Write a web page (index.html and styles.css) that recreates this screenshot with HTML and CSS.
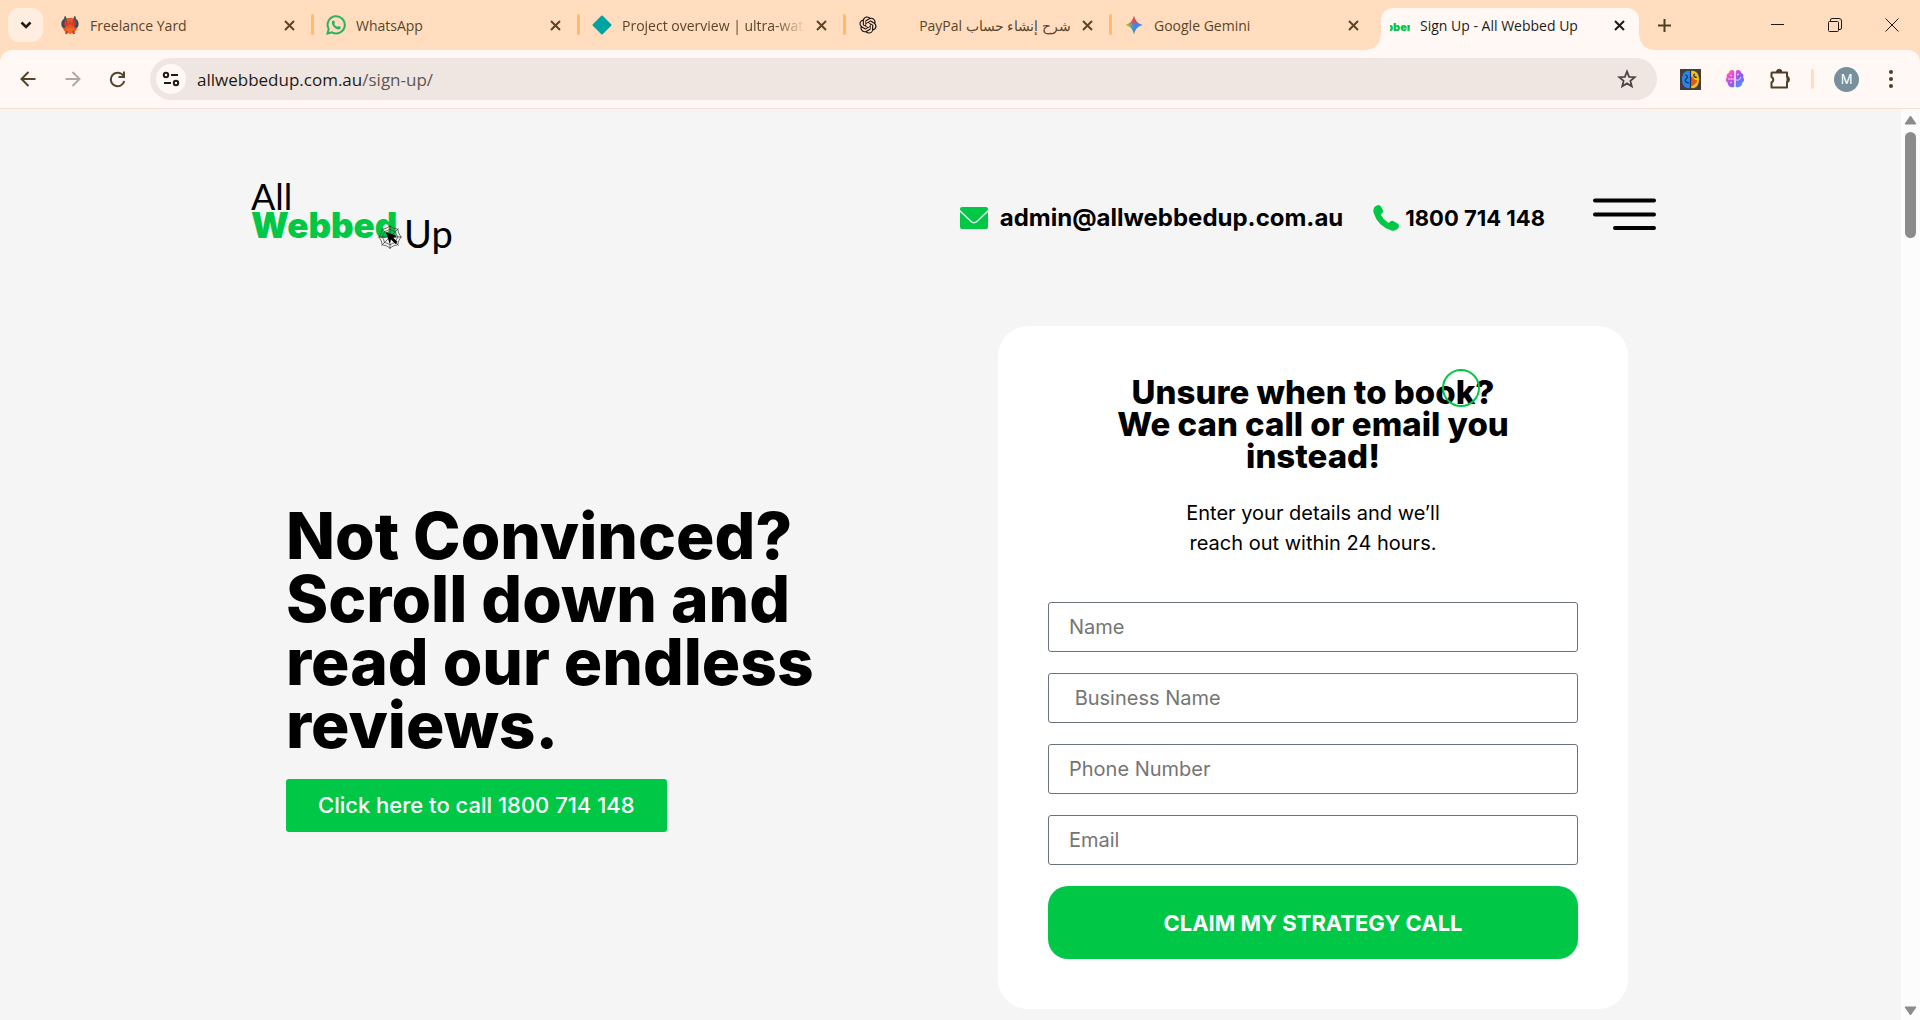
FILE: index.html
```html
<!DOCTYPE html>
<html lang="en">
<head>
<meta charset="utf-8">
<title>Sign Up - All Webbed Up</title>
<link rel="stylesheet" href="styles.css">
</head>
<body>
<div class="tabstrip">
  <button class="tab-search" aria-label="Search tabs"><svg width="12" height="8" viewBox="0 0 12 8"><path d="M1.500 1.500 6 6l4.500-4.500" fill="none" stroke="#1f1a16" stroke-width="2.600"/></svg></button>
  <div class="tab">
    <svg class="favicon" viewBox="0 0 20 20"><path d="M5 4.500Q3 2 5.500 1L7 4.500M15 4.500Q17 2 14.500 1L13 4.500" fill="#3b4a55"/><circle cx="10" cy="10.500" r="7.800" fill="#e4572a"/><path d="M2 12C0 7 3 3.500 6 3l1.500 5-3 5zM18 12c2-5-1-8.500-4-9l-1.500 5 3 5z" fill="#34505e"/><path d="M5 4 8 9l2-3 2 3 3-5 1 6-3 1-3-2-3 2-3-1z" fill="#d63a2e"/><path d="M5 17l5 2 5-2-2-4H7z" fill="#ef6b1c"/><path d="m7 16-1 3M13 16l1 3" stroke="#c9303e" stroke-width="2"/></svg>
    <span class="tab-title">Freelance Yard</span>
    <button class="tab-close" aria-label="Close tab"><svg width="11" height="11" viewBox="0 0 11 11"><path d="m1 1 9 9M10 1l-9 9"/></svg></button>
  </div>
  <div class="tab">
    <svg class="favicon" viewBox="0 0 20 20"><path d="M1.500 18.500 2.700 14A8.600 8.600 0 1 1 6 17.300z" fill="none" stroke="#2bb265" stroke-width="2"/><path d="M6 6.500C6.500 5.300 8 5 8.300 5.900l.7 1.800c.1.500-.7 1-.7 1.300.6 1.300 1.600 2.200 2.900 2.800.5 0 .9-1 1.400-.9l1.900.9c.7.400.1 2.200-1.200 2.600C9.700 15.100 5 10 6 6.500z" fill="#2bb265"/></svg>
    <span class="tab-title">WhatsApp</span>
    <button class="tab-close" aria-label="Close tab"><svg width="11" height="11" viewBox="0 0 11 11"><path d="m1 1 9 9M10 1l-9 9"/></svg></button>
  </div>
  <div class="tab">
    <svg class="favicon" viewBox="0 0 20 20"><path d="M10 1.500 18.500 10 10 18.500 1.500 10z" fill="#00a3a1" stroke="#00a3a1" stroke-width="2" stroke-linejoin="round"/></svg>
    <span class="tab-title faded">Project overview | ultra-wat</span>
    <button class="tab-close" aria-label="Close tab"><svg width="11" height="11" viewBox="0 0 11 11"><path d="m1 1 9 9M10 1l-9 9"/></svg></button>
  </div>
  <div class="tab">
    <svg class="favicon" viewBox="-2 -2 28 28"><path fill="#111" d="M22.282 9.821a5.985 5.985 0 0 0-.516-4.910 6.046 6.046 0 0 0-6.510-2.900A6.065 6.065 0 0 0 4.981 4.182a5.985 5.985 0 0 0-3.998 2.900 6.046 6.046 0 0 0 .743 7.097 5.980 5.980 0 0 0 .510 4.911 6.051 6.051 0 0 0 6.515 2.900A5.985 5.985 0 0 0 13.260 24a6.056 6.056 0 0 0 5.772-4.206 5.990 5.990 0 0 0 3.997-2.900 6.056 6.056 0 0 0-.747-7.073zM13.260 22.430a4.476 4.476 0 0 1-2.876-1.040l.141-.081 4.779-2.758a.795.795 0 0 0 .392-.681v-6.737l2.020 1.168a.071.071 0 0 1 .038.052v5.583a4.504 4.504 0 0 1-4.494 4.494zM3.600 18.304a4.470 4.470 0 0 1-.535-3.014l.142.085 4.783 2.759a.771.771 0 0 0 .780 0l5.843-3.369v2.332a.080.080 0 0 1-.033.062L9.740 19.950a4.500 4.500 0 0 1-6.140-1.646zM2.340 7.896a4.485 4.485 0 0 1 2.366-1.973V11.600a.766.766 0 0 0 .388.676l5.815 3.355-2.020 1.168a.076.076 0 0 1-.071 0l-4.830-2.786A4.504 4.504 0 0 1 2.340 7.872zm16.597 3.855-5.833-3.387L15.119 7.200a.076.076 0 0 1 .071 0l4.830 2.791a4.494 4.494 0 0 1-.676 8.105v-5.678a.790.790 0 0 0-.407-.667zm2.010-3.023-.141-.085-4.774-2.782a.776.776 0 0 0-.785 0L9.409 9.230V6.897a.066.066 0 0 1 .028-.061l4.830-2.787a4.500 4.500 0 0 1 6.680 4.660zM8.307 12.863l-2.020-1.164a.080.080 0 0 1-.038-.057V6.075a4.500 4.500 0 0 1 7.375-3.453l-.142.080L8.704 5.460a.795.795 0 0 0-.393.681zm1.097-2.365 2.602-1.500 2.607 1.500v2.999l-2.597 1.500-2.607-1.500z"/></svg>
    <span class="tab-title" dir="rtl">شرح إنشاء حساب PayPal</span>
    <button class="tab-close" aria-label="Close tab"><svg width="11" height="11" viewBox="0 0 11 11"><path d="m1 1 9 9M10 1l-9 9"/></svg></button>
  </div>
  <div class="tab no-line">
    <svg class="favicon" viewBox="0 0 20 20"><defs><linearGradient id="gem" x1="0" y1=".5" x2="1" y2=".5"><stop offset="0" stop-color="#fbbc04"/><stop offset=".3" stop-color="#7cb06a"/><stop offset=".5" stop-color="#3f86f5"/><stop offset="1" stop-color="#3b82f6"/></linearGradient><linearGradient id="gem2" x1="0" y1="0" x2="0" y2="1"><stop offset="0" stop-color="#f4433c"/><stop offset=".25" stop-color="#f4433c"/><stop offset=".5" stop-color="#f4433c" stop-opacity="0"/><stop offset=".65" stop-color="#34a853" stop-opacity="0"/><stop offset="1" stop-color="#34a853"/></linearGradient></defs><path d="M10 1c1.200 5 4 7.800 9 9-5 1.200-7.800 4-9 9-1.200-5-4-7.800-9-9 5-1.200 7.800-4 9-9z" fill="url(#gem)"/><path d="M10 1c1.200 5 4 7.800 9 9-5 1.200-7.800 4-9 9-1.200-5-4-7.800-9-9 5-1.200 7.800-4 9-9z" fill="url(#gem2)"/></svg>
    <span class="tab-title">Google Gemini</span>
    <button class="tab-close" aria-label="Close tab"><svg width="11" height="11" viewBox="0 0 11 11"><path d="m1 1 9 9M10 1l-9 9"/></svg></button>
  </div>
  <div class="tab active">
    <svg class="favicon" viewBox="0 0 20 20"><text class="favicon-text" x="-4" y="16">bber</text></svg>
    <span class="tab-title">Sign Up - All Webbed Up</span>
    <button class="tab-close" aria-label="Close tab"><svg width="11" height="11" viewBox="0 0 11 11"><path d="m1 1 9 9M10 1l-9 9"/></svg></button>
  </div>
  <button class="new-tab" aria-label="New tab"><svg width="13" height="13" viewBox="0 0 13 13"><path d="M6.500 0v13M0 6.500h13" stroke="#4f3d25" stroke-width="2"/></svg></button>
  <div class="window-buttons">
    <button aria-label="Minimise"><svg width="14" height="14" viewBox="0 0 14 14"><path d="M0 6.500h13" stroke="#1a1a1a" fill="none"/></svg></button>
    <button aria-label="Restore"><svg width="14" height="14" viewBox="0 0 14 14"><path d="M2.500 3V2a1.500 1.500 0 0 1 1.500-1.500h7A2.500 2.500 0 0 1 13.500 3v7a1.500 1.500 0 0 1-1.500 1.500h-1M1.500 3.500h8a1 1 0 0 1 1 1v8a1 1 0 0 1-1 1h-8a1 1 0 0 1-1-1v-8a1 1 0 0 1 1-1z" stroke="#1a1a1a" fill="none"/></svg></button>
    <button aria-label="Close"><svg width="14" height="14" viewBox="0 0 14 14"><path d="m.5.500 13 13m0-13-13 13" stroke="#1a1a1a" fill="none"/></svg></button>
  </div>
</div>

<div class="toolbar">
  <div class="nav-buttons">
    <button aria-label="Back"><svg width="16" height="16" viewBox="0 0 16 16"><path d="M15.500 8H2M8.500 1 1.500 8l7 7" fill="none" stroke="#56432b" stroke-width="2"/></svg></button>
    <button aria-label="Forward"><svg width="16" height="16" viewBox="0 0 16 16"><path d="M.5 8H14M7.500 1l7 7-7 7" fill="none" stroke="#b3a9a3" stroke-width="2"/></svg></button>
    <button aria-label="Reload"><svg width="17" height="17" viewBox="0 0 17 17"><path d="M14.500 5A6.800 6.800 0 1 0 15.300 10M15 .500V6H9.500" fill="none" stroke="#56432b" stroke-width="2"/></svg></button>
  </div>
  <div class="omnibox">
    <button class="site-info" aria-label="Site information"><svg width="18" height="16" viewBox="0 0 18 16"><g fill="none" stroke="#1f1a16" stroke-width="2"><circle cx="4" cy="4" r="2.200"/><path d="M9 4h7M2 12h7"/><circle cx="14" cy="12" r="2.200"/></g></svg></button>
    <span class="url">allwebbedup.com.au<span class="path">/sign-up/</span></span>
    <button class="star" aria-label="Bookmark"><svg width="20" height="20" viewBox="0 0 20 20"><path d="m10 2.500 2.100 5.300 5.700.4-4.400 3.700 1.400 5.500L10 14.400l-4.800 3 1.400-5.500-4.400-3.700 5.700-.4z" fill="none" stroke="#4d4542" stroke-width="1.800"/></svg></button>
  </div>
  <div class="extensions">
    <button aria-label="Brain extension"><svg width="21" height="21" viewBox="0 0 21 21"><path fill="#453c3b" d="M0 0h21v21H0z"/><path d="M10 2v17C5 20 2 16 2 10.500S5 1 10 2z" fill="#2a85e8"/><path d="M11 2v17c5 1 8-3 8-8.500S16 1 11 2z" fill="#f5c211"/><path d="M11 8c3-1 2 3 5 3s-1 6-5 6z" fill="#e2571a"/><path d="M5 6c3 0 3 3 1 4s0 4 3 4M15 5c-3 1 0 4 2 3M10.500 2v17" fill="none" stroke="#18305e" stroke-width="1.200"/></svg></button>
    <button aria-label="Mind extension"><svg width="20" height="20" viewBox="0 0 20 20"><defs><linearGradient id="mind" x1="0" y1="0" x2="1" y2="1"><stop offset="0" stop-color="#ff9a3c"/><stop offset=".25" stop-color="#f04ed0"/><stop offset=".6" stop-color="#8a5cf6"/><stop offset="1" stop-color="#20b8ff"/></linearGradient></defs><path d="M9.300 2.500C8 0 4 1 3.700 4 1.500 4.500 1 7 2 8.500c-2 1.500-1 4.500.7 5C2.500 17 6 19 9.300 18zM10.700 2.500C12 0 16 1 16.300 4c2.200.5 2.700 3 1.700 4.500 2 1.500 1 4.500-.7 5 .2 3.500-3.300 5.500-6.600 4.500z" fill="url(#mind)"/><path d="M3 10h6M5 6l2 1M5 14l2-1M11 11h3l2-3M14 5l-2 1" fill="none" stroke="#fff" stroke-opacity=".75"/></svg></button>
    <button aria-label="Extensions"><svg width="22" height="22" viewBox="0 0 22 22"><path d="M3 4.500h15v4.300a2.700 2.700 0 0 1 0 5.200v5.500H2.500v-5a3 3 0 0 0 0-5.500v-4z" fill="none" stroke="#4f3d25" stroke-width="2" stroke-linejoin="round"/><path d="M7.500 4a2.700 2.700 0 0 1 5.400 0zM18 9a2.700 2.700 0 0 1 0 5z" fill="#4f3d25" stroke="#4f3d25"/></svg></button>
    <span class="divider"></span>
    <button class="avatar" aria-label="Profile">M</button>
    <button class="more" aria-label="Menu"><svg width="4" height="18" viewBox="0 0 4 18"><g fill="#4f3d25"><circle cx="2" cy="2" r="2"/><circle cx="2" cy="9" r="2"/><circle cx="2" cy="16" r="2"/></g></svg></button>
  </div>
</div>

<div class="viewport">
  <div class="page">
    <header class="site-header">
      <a class="logo" href="#" aria-label="All Webbed Up">
        <svg width="206" height="73" viewBox="0 0 206 73">
          <text class="logo-thin" x="4" y="29" font-size="36">All</text>
          <text class="logo-bold" x="4" y="57" font-size="35">Webbed</text>
          <text class="logo-thin" x="157" y="67" font-size="38">Up</text>
          <g fill="none" stroke="#333" stroke-width=".7"><path d="M143 44v24M131 56h24M134.500 47.500l17 17M151.500 47.500l-17 17"/><path d="M143 48q3 2.500 5.600 2.400Q148.500 53 151 56q-2.500 3-2.400 5.600Q146 61.500 143 64q-3-2.500-5.600-2.400Q137.500 59 135 56q2.500-3 2.400-5.600Q140 50.500 143 48zM143 45q4 3 7.800 3.200Q151 52 154 56q-3 4-3.200 7.800Q147 64 143 67q-4-3-7.800-3.200Q135 60 132 56q3-4 3.200-7.800Q139 48 143 45z"/></g>
          <path d="m139 51 11 4-4 1.500 4.500 4.500-2 2-4.500-4.500-1.500 4z" fill="#000"/>
        </svg>
      </a>
      <nav class="contacts">
        <a class="contact mail" href="mailto:admin@allwebbedup.com.au"><svg width="28" height="22" viewBox="0 0 28 22"><path d="M2 0h24a2 2 0 0 1 2 2v1L16.500 14q-2.500 2-5 0L0 3V2a2 2 0 0 1 2-2z" fill="#00c846"/><path d="m0 5 11 10.300q3 2.200 6 0L28 5v15a2 2 0 0 1-2 2H2a2 2 0 0 1-2-2z" fill="#00c846"/></svg>admin@allwebbedup.com.au</a>
        <a class="contact phone" href="tel:1800714148"><svg width="26" height="26" viewBox="0 0 26 26"><path d="M1.500 2Q4 0 5.500 0 7 0 8 1.500l2 4q.5 1.500-1 2.800L7.800 9.800q2.500 5 7.800 8.200l2-1.800q1.200-1 2.700-.2l4.200 2.600q1.500 1 1.500 2.400 0 1.500-1.500 3Q22 26.500 18.500 25.500 4.500 21 .5 7.500 0 4 1.500 2z" fill="#00c846"/></svg>1800 714 148</a>
        <button class="menu" aria-label="Open menu"><svg width="66" height="42" viewBox="0 0 66 42"><path d="M4 3.500h59M4 17.500h59M24 31h39" stroke="#000" stroke-width="4" stroke-linecap="round"/></svg></button>
      </nav>
    </header>

    <main class="hero">
      <section class="pitch">
        <h1>Not Convinced?<br>Scroll down and<br>read our endless<br>reviews.</h1>
        <a class="call" href="tel:1800714148">Click here to call 1800 714 148</a>
      </section>
      <form class="card">
        <h2>Unsure when to book?<br>We can call or email you<br>instead!<span class="cursor-ring"></span></h2>
        <p>Enter your details and we’ll<br>reach out within 24 hours.</p>
        <input type="text" aria-label="Name" placeholder="Name">
        <input type="text" aria-label="Business Name" placeholder="&nbsp;Business Name">
        <input type="tel" aria-label="Phone Number" placeholder="Phone Number">
        <input type="email" aria-label="Email" placeholder="Email">
        <button class="submit" type="submit">CLAIM MY STRATEGY CALL</button>
      </form>
    </main>
  </div>
  <div class="scrollbar">
    <svg width="13" height="10" viewBox="0 0 13 10"><path d="M6.500 1 12 9H1z" fill="#8b8b8b" stroke="#8b8b8b" stroke-linejoin="round"/></svg>
    <span class="thumb"></span>
    <svg class="down" width="13" height="10" viewBox="0 0 13 10"><path d="M6.500 9 1 1h11z" fill="#8b8b8b" stroke="#8b8b8b" stroke-linejoin="round"/></svg>
  </div>
</div>
</body>
</html>
```
FILE: styles.css
```css
* { box-sizing: border-box; }
body { margin: 0; min-height: 100vh; display: flex; flex-direction: column; background: #ffddbe; font-family: Inter, sans-serif; color: #000; }
button { border: 0; padding: 0; background: none; font: inherit; color: inherit; display: flex; align-items: center; justify-content: center; }
svg { display: block; flex: none; }
a { color: inherit; text-decoration: none; }

/* Tab strip */
.tabstrip { display: flex; align-items: center; height: 50px; padding-left: 8px; font-family: "Open Sans", "Noto Sans", sans-serif; font-size: 14px; color: #5b452a; }
.tab-search { width: 35px; height: 34px; margin-right: 5px; border-radius: 11px; background: #ffede0; flex: none; }
.tab { position: relative; flex: 0 1 266px; min-width: 0; height: 42px; margin-top: 8px; padding: 0 19px 8px 12px; display: flex; align-items: center; gap: 10px; }
.tab::after { content: ""; position: absolute; right: 0; top: 6px; width: 3px; height: 21px; border-radius: 2px; background: #ffbb6b; }
.tab.no-line::after { display: none; }
.favicon { width: 20px; height: 20px; overflow: hidden; }
.favicon-text { font: 900 11px Inter, sans-serif; fill: #00c846; }
.tab-title { flex: 1; min-width: 0; overflow: hidden; white-space: nowrap; line-height: 24px; padding-top: 2px; }
.tab-title.faded { mask-image: linear-gradient(90deg, #000 84%, transparent); }
.tab-close { width: 12px; height: 12px; }
.tab-close path { stroke: currentColor; stroke-width: 2; fill: none; }
.tab.active { color: #1f1a16; }
.tab.active > * { position: relative; z-index: 1; }
.tab.active::before { content: ""; position: absolute; left: 3px; right: 5px; top: 0; bottom: 0; background: #fff8f5; border-radius: 12px 12px 0 0; }
.tab.active::after { left: -11px; right: -9px; top: auto; bottom: 0; width: auto; height: 14px; border-radius: 0; background: radial-gradient(circle at 0 0, transparent 13px, #fff8f5 14px) left / 14px 14px no-repeat, radial-gradient(circle at 100% 0, transparent 13px, #fff8f5 14px) right / 14px 14px no-repeat; }
.new-tab { width: 28px; height: 28px; margin-left: 6px; flex: none; }
.window-buttons { margin-left: auto; display: flex; }
.window-buttons button { width: 57px; height: 50px; }

/* Toolbar */
.toolbar { display: flex; align-items: center; height: 59px; border-bottom: 1px solid #f6dfd0; border-radius: 12px 12px 0 0; background: #fff8f5; }
.nav-buttons { display: flex; width: 150px; padding-left: 5px; }
.nav-buttons button { width: 45px; height: 40px; }
.omnibox { flex: 1; height: 42px; padding: 0 20px 0 6px; display: flex; align-items: center; border-radius: 21px; background: #efe6e1; }
.site-info { width: 30px; height: 30px; border-radius: 50%; background: #fff8f5; }
.url { flex: 1; margin-left: 11px; font: 17px "Open Sans", "Noto Sans", sans-serif; color: #1f1a16; }
.path { color: #5f5652; }
.extensions { display: flex; align-items: center; gap: 24px; width: 263px; padding-left: 23px; }
.divider { width: 3px; height: 20px; margin: 0 -4px; border-radius: 2px; background: #ffddbe; }
.avatar { width: 25px; height: 25px; border-radius: 50%; background: #78909c; color: #fff; font-size: 13px; }
.more { margin-left: 6px; }

/* Page */
.viewport { flex: 1; display: flex; background: #f5f5f5; }
.page { flex: 1; min-width: 0; padding: 0 24px 10px; }
.site-header { max-width: 1407px; margin: 0 auto; padding: 72px 0; display: flex; justify-content: space-between; align-items: center; }
.logo-thin { font-family: Lato, sans-serif; }
.logo-bold { font-family: Inter, sans-serif; font-weight: 900; fill: #00c846; }
.contacts { display: flex; align-items: center; }
.contact { display: flex; align-items: center; font-weight: 700; }
.mail { gap: 12px; margin-right: 30px; font-size: 24px; }
.phone { gap: 6px; margin-right: 46px; font-size: 22px; }
.menu { margin-right: -3px; }
.hero { max-width: 1407px; margin: 0 auto; padding: 0 26px 0 39px; display: flex; justify-content: space-between; align-items: center; }
h1, h2, p { margin: 0; }
.pitch { display: flex; flex-direction: column; align-items: flex-start; gap: 23px; }
h1 { font-size: 64px; line-height: 63px; font-weight: 800; }
.call { padding: 0 32px; border-radius: 3px; background: #00c846; color: #fff; font-size: 22px; line-height: 53px; font-weight: 500; }
.card { width: 630px; padding: 50px; display: flex; flex-direction: column; gap: 21px; border-radius: 30px; background: #fff; text-align: center; }
h2 { position: relative; font-size: 33px; line-height: 32px; font-weight: 800; }
.cursor-ring { position: absolute; left: 394px; top: -7px; width: 38px; height: 38px; border: 2px solid #00c846; border-radius: 50%; }
.card p { margin: 5px 0 23px; font-size: 20px; line-height: 30px; }
input { height: 50px; padding: 0 20px; border: 1px solid #69727d; border-radius: 3px; background: #fff; font: 20px Inter, sans-serif; color: #000; }
input::placeholder { color: #757575; }
.submit { height: 73px; border-radius: 20px; background: #00c846; color: #fff; font-size: 22px; font-weight: 700; }
.scrollbar { width: 19px; padding: 6px 0 4px; display: flex; flex-direction: column; align-items: center; gap: 7px; background: #fcfcfc; }
.thumb { width: 11px; height: 106px; border-radius: 6px; background: #8b8b8b; }
.down { margin-top: auto; }
```
